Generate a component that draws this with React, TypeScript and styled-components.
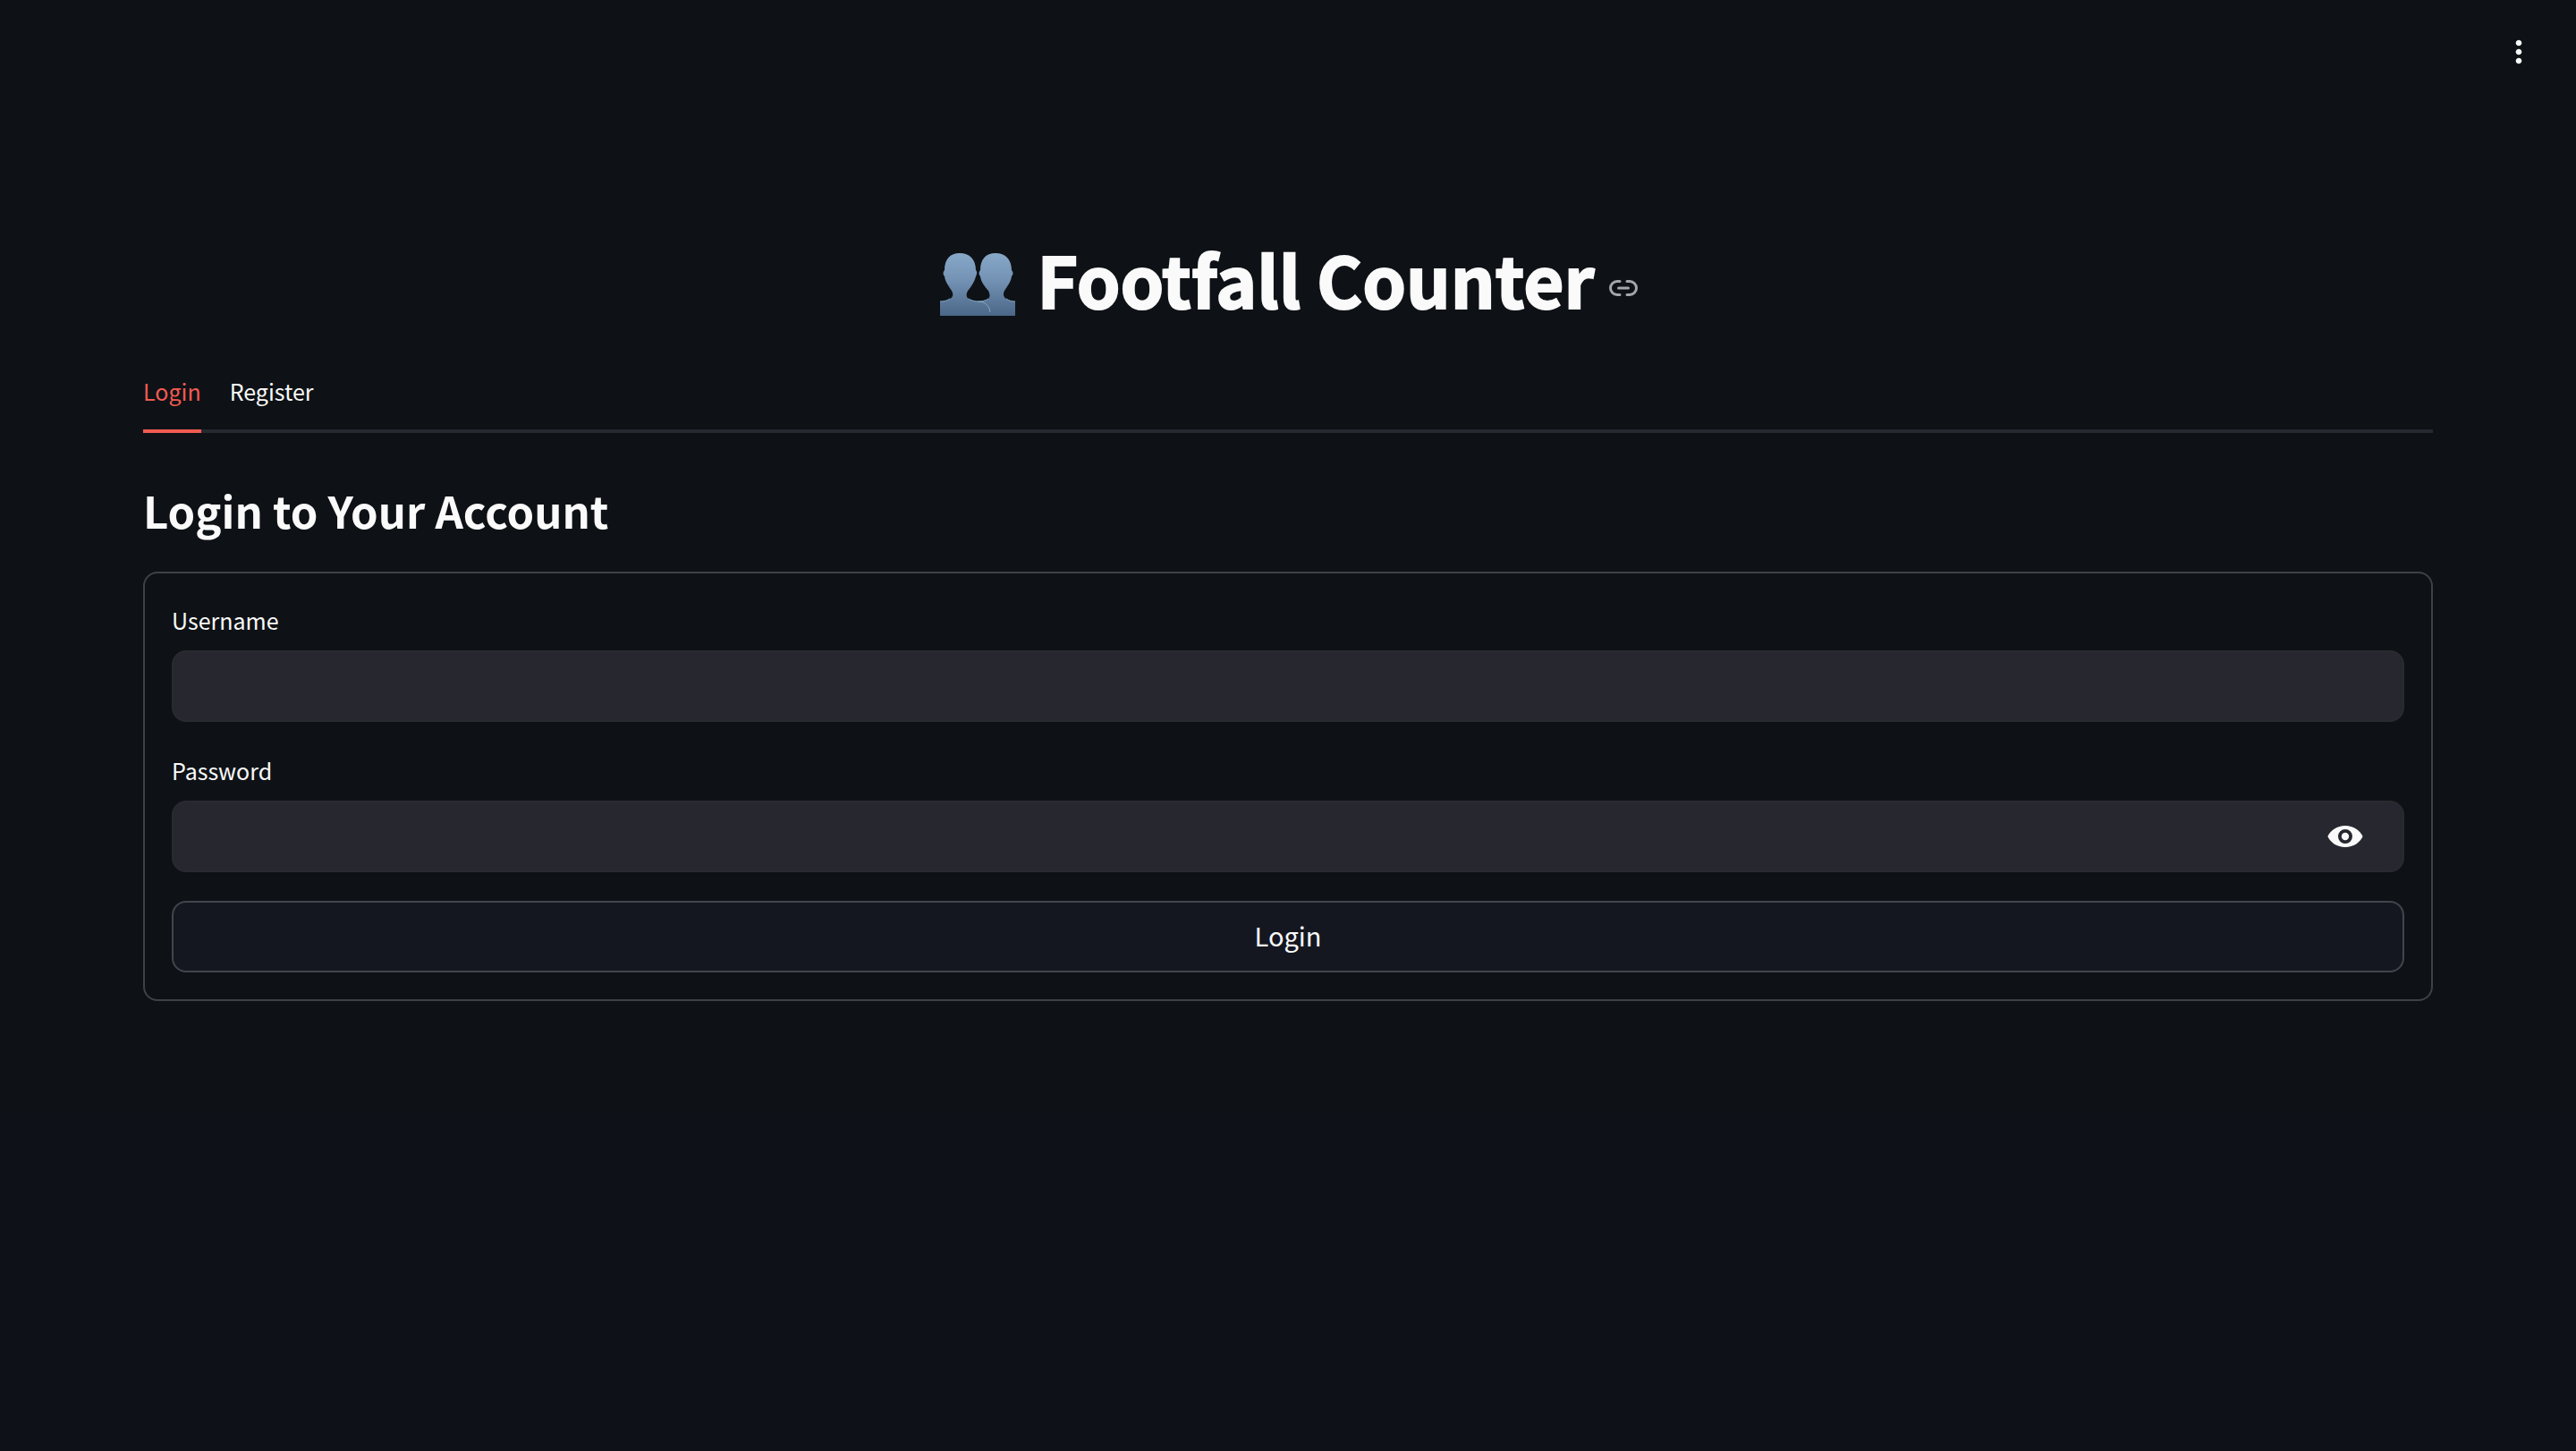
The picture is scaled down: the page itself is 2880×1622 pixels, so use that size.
import React, { useState } from "react";
import styled, { createGlobalStyle } from "styled-components";

const GlobalStyle = createGlobalStyle`
  *, *::before, *::after { box-sizing: border-box; }
  body {
    margin: 0;
    background: #0e1118;
    color: #fafafa;
    font-family: "Noto Sans CJK JP", "Noto Sans", sans-serif;
    font-size: 25px;
  }
  button, input { font: inherit; color: inherit; }
`;

const Page = styled.div`
  display: flex;
  flex-direction: column;
  background: #0e1216;
`;

const Header = styled.header`
  display: flex;
  justify-content: flex-end;
  align-items: center;
  height: 116px;
  padding: 0 44px;
`;

const IconButton = styled.button`
  display: flex;
  align-items: center;
  justify-content: center;
  padding: 0;
  border: 0;
  background: none;
  cursor: pointer;
`;

const Main = styled.main`
  display: flex;
  flex-direction: column;
  padding: 124px 160px;
`;

const TitleRow = styled.div`
  display: flex;
  justify-content: center;
  align-items: center;
  height: 148px;
`;

const Title = styled.h1`
  display: flex;
  align-items: center;
  gap: 24px;
  margin: 0;
  padding-bottom: 6px;
  font-size: 78px;
  line-height: 108px;
  font-weight: 700;
  -webkit-text-stroke: 2px currentColor;

  svg {
    margin-top: 14px;
  }
`;

const AnchorLink = styled.a`
  display: flex;
  margin: 16px 0 0 16px;
  color: #a3a6ab;
`;

const TabList = styled.div`
  display: flex;
  gap: 32px;
  height: 96px;
  box-shadow: inset 0 -4px #262930;
`;

const Tab = styled.button<{ $active: boolean }>`
  padding: 6px 0 0;
  border: 0;
  border-bottom: 4px solid ${(p) => (p.$active ? "#f15a52" : "transparent")};
  background: none;
  color: ${(p) => (p.$active ? "#f15a52" : "#fafafa")};
  cursor: pointer;
`;

const Panel = styled.section`
  padding-top: 50px;
`;

const Subtitle = styled.h3`
  margin: 0;
  padding-bottom: 33px;
  font-size: 49px;
  line-height: 72px;
  font-weight: 700;
`;

const Form = styled.form`
  display: flex;
  flex-direction: column;
  gap: 32px;
  padding: 30px;
  border: 2px solid #3e4147;
  border-radius: 16px;
`;

const Field = styled.div`
  display: flex;
  flex-direction: column;
  gap: 12px;
`;

const Label = styled.label`
  line-height: 44px;
`;

const InputBox = styled.div`
  display: flex;
  height: 80px;
  padding-right: 44px;
  border: 2px solid #292b30;
  border-radius: 16px;
  background: #272730;
`;

const Input = styled.input`
  flex: 1;
  min-width: 0;
  padding: 0 24px;
  border: 0;
  outline: 0;
  background: none;
`;

const SubmitButton = styled.button`
  height: 80px;
  padding: 0 24px 4px;
  border: 2px solid #42454c;
  border-radius: 16px;
  background: #141720;
  font-size: 29px;
  line-height: 48px;
  cursor: pointer;
`;

const People = () => (
  <svg width="86" height="72" viewBox="-1 -1 86 72" role="img" aria-label="People">
    <defs>
      <linearGradient id="skin" gradientUnits="userSpaceOnUse" x1="0" y1="0" x2="0" y2="70">
        <stop offset="0" stopColor="#88a8c8" />
        <stop offset="0.4" stopColor="#7594b6" />
        <stop offset="1" stopColor="#4b6788" />
      </linearGradient>
    </defs>
    <path
      d="M42 70V54c5 0 9-1 12-3 2-2 2-5 0-9-4-5-8-9-9-16-2-2-2-5 0-7C45 7 51 0 62 0s18 7 18 19c2 2 2 5 0 7-1 7-5 11-8 16-2 4-1 7 2 9 3 2 6 3 10 3v16z"
      fill="url(#skin)"
    />
    <path
      d="M0 70V54c4 0 8-1 11-3 4-2 4-5 2-9-3-5-7-9-8-16-2-2-2-5 0-7C5 7 11 0 22 0s18 7 18 19c2 2 1 5 0 7-2 7-5 11-9 16-2 4-2 7 1 9 8 5 24 0 24 19z"
      fill="url(#skin)"
    />
    <path d="M42 54c8 0 13 4 14 12" fill="none" stroke="#86a9c4" strokeWidth="1" />
    <path
      d="M0 54c4 0 8-1 11-3M32 51c3 2 7 3 11 3s8-1 11-3M74 51c3 2 6 3 10 3"
      fill="none"
      stroke="#80a6c3"
      strokeWidth="1"
    />
  </svg>
);

const LinkIcon = () => (
  <svg width="32" height="18" viewBox="0 0 32 18" fill="none" stroke="currentColor" strokeWidth="3" strokeLinecap="round" aria-hidden="true">
    <path d="M12 1.500H9a7.500 7.500 0 0 0 0 15h3M20 1.500h3a7.500 7.500 0 0 1 0 15h-3M10.500 9h11" />
  </svg>
);

const DotsIcon = () => (
  <svg width="40" height="40" viewBox="0 0 24 24" fill="currentColor" aria-hidden="true">
    <path d="M12 8c1.100 0 2-.9 2-2s-.9-2-2-2-2 .9-2 2 .9 2 2 2zm0 2c-1.100 0-2 .9-2 2s.9 2 2 2 2-.9 2-2-.9-2-2-2zm0 6c-1.100 0-2 .9-2 2s.9 2 2 2 2-.9 2-2-.9-2-2-2z" />
  </svg>
);

const EyeIcon = () => (
  <svg width="40" height="24" viewBox="0 0 40 24" aria-hidden="true">
    <path fill="currentColor" fillRule="evenodd" d="M20 0C11 0 3.500 5 .4 12 3.500 19 11 24 20 24s16.500-5 19.600-12C36.500 5 29 0 20 0zm0 20a8 8 0 1 1 0-16 8 8 0 0 1 0 16z" />
    <circle cx="20" cy="12" r="4.200" fill="currentColor" />
  </svg>
);

const TABS = ["Login", "Register"];

export default function App() {
  const [tab, setTab] = useState("Login");
  const [visible, setVisible] = useState(false);

  return (
    <Page>
      <GlobalStyle />
      <Header>
        <IconButton type="button" aria-label="Main menu">
          <DotsIcon />
        </IconButton>
      </Header>
      <Main>
        <TitleRow>
          <Title id="footfall-counter">
            <People />
            Footfall Counter
          </Title>
          <AnchorLink href="#footfall-counter" aria-label="Link to heading">
            <LinkIcon />
          </AnchorLink>
        </TitleRow>
        <TabList role="tablist">
          {TABS.map((name) => (
            <Tab key={name} type="button" role="tab" aria-selected={tab === name} $active={tab === name} onClick={() => setTab(name)}>
              {name}
            </Tab>
          ))}
        </TabList>
        <Panel role="tabpanel">
          <Subtitle>Login to Your Account</Subtitle>
          <Form onSubmit={(e) => e.preventDefault()}>
            <Field>
              <Label htmlFor="username">Username</Label>
              <InputBox>
                <Input id="username" type="text" autoComplete="username" />
              </InputBox>
            </Field>
            <Field>
              <Label htmlFor="password">Password</Label>
              <InputBox>
                <Input id="password" type={visible ? "text" : "password"} autoComplete="current-password" />
                <IconButton type="button" aria-label="Show password text" onClick={() => setVisible(!visible)}>
                  <EyeIcon />
                </IconButton>
              </InputBox>
            </Field>
            <SubmitButton type="submit">Login</SubmitButton>
          </Form>
        </Panel>
      </Main>
    </Page>
  );
}
